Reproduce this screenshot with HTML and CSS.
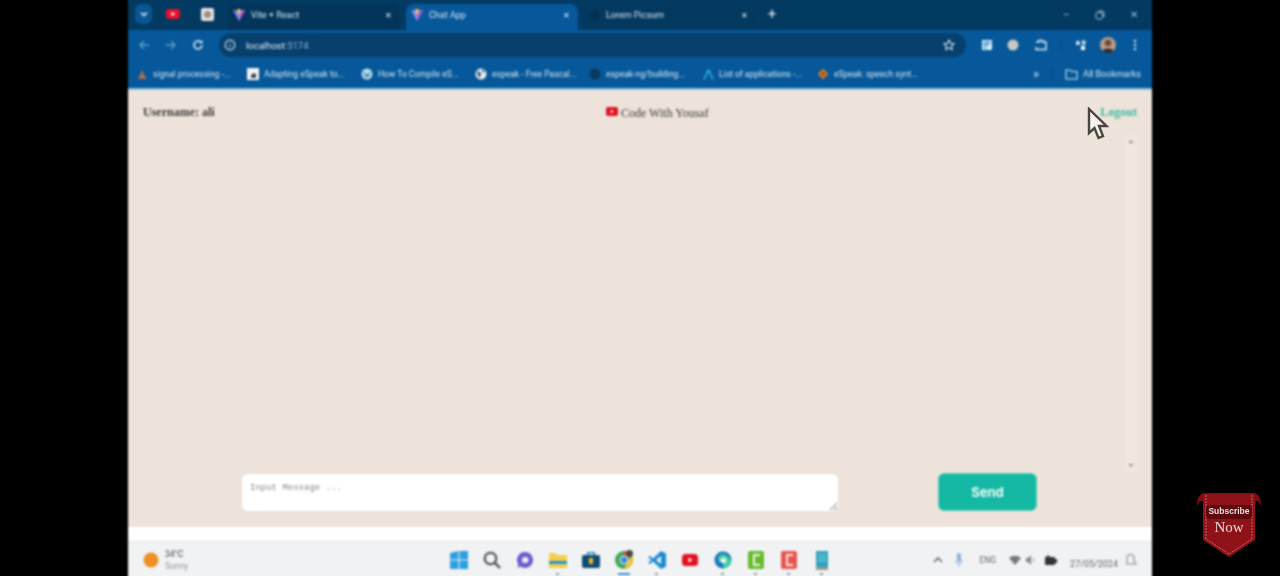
FILE: index.html
```html
<!DOCTYPE html>
<html lang="en">
<head>
    <meta charset="UTF-8">
    <title>Chat App</title>
    <link rel="stylesheet" href="styles.css">
</head>
<body>
    <div class="screen">

        <!-- tabs -->
        <div class="tabbar">
            <div class="tab-menu">
                <svg width="10" height="10" viewBox="0 0 10 10"><path d="M2 3.5l3 3 3-3" fill="none" stroke="#dcecf8" stroke-width="1.6"/></svg>
            </div>
            <div class="pinned">
                <svg width="14" height="10" viewBox="0 0 14 10"><rect width="14" height="10" rx="3" fill="#e8102a"/><path d="M5.5 3l4 2-4 2z" fill="#fff"/></svg>
            </div>
            <div class="pinned">
                <svg width="13" height="13" viewBox="0 0 13 13"><rect width="13" height="13" rx="2" fill="#e6e3de"/><circle cx="6.5" cy="6.5" r="3.6" fill="#9b8f80"/></svg>
            </div>
            <div class="tab">
                <svg class="vite" width="12" height="12" viewBox="0 0 12 12"><path d="M0 1l6 1 6-1-6 11z" fill="#7f8cf0"/><path d="M6 2l6-1-6 11z" fill="#b05fd8"/><path d="M4 0l4 .6-2 6z" fill="#ffd34d"/></svg>
                <span class="tab-title">Vite + React</span>
                <span class="tab-close">✕</span>
            </div>
            <div class="tab active">
                <svg class="vite" width="12" height="12" viewBox="0 0 12 12"><path d="M0 1l6 1 6-1-6 11z" fill="#7f8cf0"/><path d="M6 2l6-1-6 11z" fill="#b05fd8"/><path d="M4 0l4 .6-2 6z" fill="#ffd34d"/></svg>
                <span class="tab-title">Chat App</span>
                <span class="tab-close">✕</span>
            </div>
            <div class="tab last">
                <svg width="11" height="11" viewBox="0 0 11 11"><circle cx="5.5" cy="5.5" r="5" fill="#07304f"/></svg>
                <span class="tab-title">Lorem Picsum</span>
                <span class="tab-close">✕</span>
            </div>
            <div class="new-tab">+</div>
            <div class="win-btns">
                <span>–</span>
                <svg width="10" height="10" viewBox="0 0 10 10"><rect x="1" y="2.5" width="6.5" height="6.5" rx="1.5" fill="none" stroke="#a9c3d6"/><path d="M3 1h4.5a1.5 1.5 0 0 1 1.5 1.5v4.5" fill="none" stroke="#a9c3d6"/></svg>
                <span>✕</span>
            </div>
        </div>

        <!-- url bar -->
        <div class="toolbar">
            <svg class="nav" width="12" height="12" viewBox="0 0 12 12"><path d="M11 6H2M6 2L2 6l4 4" fill="none" stroke="#5f9fce" stroke-width="1.3"/></svg>
            <svg class="nav" width="12" height="12" viewBox="0 0 12 12"><path d="M1 6h9M6 2l4 4-4 4" fill="none" stroke="#5f9fce" stroke-width="1.3"/></svg>
            <svg class="nav" width="12" height="12" viewBox="0 0 12 12"><path d="M10 6a4 4 0 1 1-1.2-2.900" fill="none" stroke="#e4f0fa" stroke-width="1.5"/><path d="M10.5 1v3.300H7.200z" fill="#e4f0fa"/></svg>
            <div class="omnibox">
                <svg width="12" height="12" viewBox="0 0 12 12"><circle cx="6" cy="6" r="4.8" fill="none" stroke="#cfe3f2" stroke-width="1.2"/><path d="M6 5.5v3M6 3.400v1" stroke="#cfe3f2"/></svg>
                <span class="url">localhost<span class="port">:5174</span></span>
                <svg class="star" width="12" height="12" viewBox="0 0 12 12"><path d="M6 1l1.5 3.300 3.600.4-2.700 2.400.8 3.500L6 8.800l-3.200 1.800.8-3.500L.9 4.700l3.600-.4z" fill="none" stroke="#d8e8f4" stroke-width="1.1"/></svg>
            </div>
            <div class="ext-icons">
                <svg class="e1" width="12" height="12" viewBox="0 0 12 12"><rect x="1" y="1" width="10" height="10" fill="#d6ecf8"/><path d="M2.5 3.500h7M2.5 6h5" stroke="#2b82c0" stroke-width="1.3"/><rect x="2.5" y="8" width="3" height="2" fill="#37c0e0"/></svg>
                <svg class="e2" width="12" height="12" viewBox="0 0 12 12"><circle cx="6" cy="6" r="5.5" fill="#c9c9c4"/></svg>
                <svg class="e3" width="14" height="14" viewBox="0 0 14 14"><path d="M2 4h3V2.500h3.500V4H12v7.500H2V9" fill="none" stroke="#dcecf8" stroke-width="1.4"/></svg>
                <i class="sep e4"></i>
                <svg class="e5" width="12" height="12" viewBox="0 0 12 12"><path d="M1 2h4v4H1zM7 1l4 1-1 4H7z" fill="#c3d7e6"/><rect x="6" y="7" width="4" height="4" fill="#fff"/></svg>
                <svg class="e6" width="16" height="16" viewBox="0 0 16 16"><circle cx="8" cy="8" r="8" fill="#b89a86"/><circle cx="8" cy="6" r="3.2" fill="#6a4a3a"/><path d="M2.5 14c1-3.500 10-3.500 11 0a8 8 0 0 1-11 0z" fill="#2b2a33"/></svg>
                <svg class="e7" width="4" height="12" viewBox="0 0 4 12"><circle cx="2" cy="2" r="1.2" fill="#d8e8f4"/><circle cx="2" cy="6" r="1.2" fill="#d8e8f4"/><circle cx="2" cy="10" r="1.2" fill="#d8e8f4"/></svg>
            </div>
        </div>

        <!-- bookmarks -->
        <div class="bookmarks">
            <div class="bm first">
                <svg width="11" height="11" viewBox="0 0 11 11"><path d="M1 10L5 1l2 5 3 4z" fill="#a3714f"/></svg>
                <span>signal processing -...</span>
            </div>
            <div class="bm">
                <svg width="12" height="12" viewBox="0 0 12 12"><rect width="12" height="12" fill="#f3f3f3"/><path d="M4 8a3 3 0 0 1 5-2v4H4z" fill="#33475b"/></svg>
                <span>Adapting eSpeak to...</span>
            </div>
            <div class="bm">
                <svg width="12" height="12" viewBox="0 0 12 12"><circle cx="6" cy="6" r="5.5" fill="#b8dbe9"/><path d="M3 4l2 5 1-3 1 3 2-5" fill="none" stroke="#2a7aa5"/></svg>
                <span>How To Compile eS...</span>
            </div>
            <div class="bm">
                <svg width="12" height="12" viewBox="0 0 12 12"><circle cx="6" cy="6" r="5.5" fill="#e9eef2"/><path d="M2 3l3 1 1 3-2 3-1-3zM7 1l3 2-2 2z" fill="#27506f"/></svg>
                <span>espeak - Free Pascal...</span>
            </div>
            <div class="bm">
                <svg width="12" height="12" viewBox="0 0 12 12"><circle cx="6" cy="6" r="5.5" fill="#0a3a60"/></svg>
                <span>espeak-ng/building...</span>
            </div>
            <div class="bm">
                <svg width="11" height="11" viewBox="0 0 11 11"><path d="M1 10.500L5.500 1 10 10.500" fill="none" stroke="#30b4ea" stroke-width="1.6"/></svg>
                <span>List of applications -...</span>
            </div>
            <div class="bm">
                <svg width="12" height="12" viewBox="0 0 12 12"><path d="M6 .5L11.500 6 6 11.500.5 6z" fill="#c9772f"/><circle cx="6" cy="6" r="2" fill="#8d5a2e"/></svg>
                <span>eSpeak: speech synt...</span>
            </div>
            <div class="bm-end">
                <span class="more">»</span>
                <i class="sep"></i>
                <svg width="13" height="11" viewBox="0 0 13 11"><path d="M1 1h4l1.500 1.500H12V10H1z" fill="none" stroke="#c9dfef" stroke-width="1.1"/></svg>
                <span>All Bookmarks</span>
            </div>
        </div>

        <!-- page -->
        <div class="chat">
            <div class="chat-head">
                <div class="user">Username: ali</div>
                <div class="channel">
                    <svg width="12" height="9" viewBox="0 0 12 9"><rect width="12" height="9" rx="2" fill="#e3101f"/><path d="M4.800 2.600l3 1.900-3 1.900z" fill="#fff"/></svg>
                    <span>Code With Yousaf</span>
                </div>
                <a class="logout">Logout</a>
            </div>
            <div class="messages">
                <div class="scroll">
                    <span class="up"></span>
                    <span class="down"></span>
                </div>
            </div>
            <div class="chat-form">
                <textarea class="msg" placeholder="Input Message ..."></textarea>
                <button class="send">Send</button>
            </div>
        </div>
        <div class="strip"></div>

        <!-- windows taskbar -->
        <div class="taskbar">
            <div class="weather">
                <svg width="16" height="16" viewBox="0 0 16 16"><circle cx="8" cy="8" r="7.5" fill="#ee9024"/></svg>
                <div class="weather-txt"><span>34°C</span><span class="sunny">Sunny</span></div>
            </div>
            <div class="apps">
                <div class="app">
                    <svg width="18" height="18" viewBox="0 0 18 18"><path d="M0 2l8.500-2v8.500H0zM9.500 0H18v8.500H9.500zM0 9.500h8.500V18H0zM9.500 9.500H18V18H9.500z" fill="#2b9fe0"/></svg>
                </div>
                <div class="app">
                    <svg width="18" height="18" viewBox="0 0 18 18"><circle cx="7.5" cy="7.5" r="5.8" fill="none" stroke="#444" stroke-width="2"/><path d="M12 12l5 5" stroke="#444" stroke-width="2.2"/></svg>
                </div>
                <div class="app">
                    <svg width="18" height="18" viewBox="0 0 18 18"><path d="M9 1a8 8 0 1 1-4.500 14.600L1.500 17l.9-3.500A8 8 0 0 1 9 1z" fill="#6d5bd0"/><rect x="6" y="6" width="6.5" height="6" rx="3" fill="#eee"/></svg>
                </div>
                <div class="app dot">
                    <svg width="18" height="16" viewBox="0 0 18 16"><path d="M0 1h6l2 2h10v13H0z" fill="#f4cf4a"/><rect y="9" width="18" height="3" fill="#2b8fd0"/></svg>
                </div>
                <div class="app">
                    <svg width="18" height="16" viewBox="0 0 18 16"><rect y="3" width="18" height="13" rx="2" fill="#0f4a75"/><path d="M5 0h8v3h-1.500V1.500h-5V3H5z" fill="#1a86c9"/><rect x="7" y="6" width="4" height="6" fill="#e8b52c"/></svg>
                </div>
                <div class="app open">
                    <svg width="20" height="20" viewBox="0 0 20 20"><circle cx="10" cy="10" r="9" fill="#3aa655"/><path d="M10 1a9 9 0 0 1 8 5h-8z" fill="#e5483c"/><path d="M18 6a9 9 0 0 1-8 13l4-8z" fill="#f2c230"/><circle cx="10" cy="10" r="4" fill="#3f82e0" stroke="#fff"/><circle cx="15.5" cy="3.5" r="3.5" fill="#4b4643"/></svg>
                </div>
                <div class="app dot">
                    <svg width="18" height="18" viewBox="0 0 18 18"><path d="M13 0l5 2.500v13L13 18 5 10.500 2 13 0 11.500 3.500 9 0 6.500 2 5l3 2.500z" fill="#1c8ad6"/><path d="M13 5L8 9l5 4z" fill="#f1f2f3"/></svg>
                </div>
                <div class="app">
                    <svg width="16" height="12" viewBox="0 0 16 12"><rect width="16" height="12" rx="3.5" fill="#e3101f"/><path d="M6.500 3.500l4 2.500-4 2.500z" fill="#fff"/></svg>
                </div>
                <div class="app dot">
                    <svg width="18" height="18" viewBox="0 0 18 18"><circle cx="9" cy="9" r="8.5" fill="#1773bd"/><path d="M5 11a5 5 0 0 1 8-6c3 1 4 4 4 6a8 8 0 0 1-6 6c-3-1-3-4-1-6z" fill="#3fd0a5"/><circle cx="9.5" cy="9.5" r="2.8" fill="#f1f2f3"/></svg>
                </div>
                <div class="app dot">
                    <svg width="16" height="18" viewBox="0 0 16 18"><rect width="16" height="18" rx="2" fill="#66bb2e"/><path d="M12 4H6v10h6" fill="none" stroke="#eef7e4" stroke-width="2"/></svg>
                </div>
                <div class="app dot">
                    <svg width="16" height="18" viewBox="0 0 16 18"><rect width="16" height="18" rx="2" fill="#e8534d"/><path d="M12 4H6v10h6" fill="none" stroke="#fbe8e6" stroke-width="2"/></svg>
                </div>
                <div class="app dot">
                    <svg width="12" height="19" viewBox="0 0 12 19"><rect width="12" height="16" fill="#2ea3bd"/><rect y="16" width="12" height="3" fill="#9c9a8f"/><path d="M2 4h8M2 7h8M2 10h8" stroke="#8fd4e2"/></svg>
                </div>
            </div>
            <div class="tray">
                <svg width="10" height="6" viewBox="0 0 10 6"><path d="M1 5l4-4 4 4" fill="none" stroke="#555" stroke-width="1.3"/></svg>
                <svg class="t-mic" width="8" height="14" viewBox="0 0 8 14"><rect x="2" y="0" width="4" height="9" rx="2" fill="#8fb2d8"/><path d="M.5 7a3.500 3.500 0 0 0 7 0M4 11v3" fill="none" stroke="#8fb2d8"/></svg>
                <span class="t-lang">ENG</span>
                <svg class="t-wifi" width="12" height="10" viewBox="0 0 12 10"><path d="M0 3a9 9 0 0 1 12 0L6 10z" fill="#777"/></svg>
                <svg class="t-vol" width="9" height="10" viewBox="0 0 9 10"><path d="M0 3h2l3-3v10L2 7H0z" fill="#888"/><path d="M7 3a3 3 0 0 1 0 4" fill="none" stroke="#999"/></svg>
                <svg class="t-bat" width="12" height="10" viewBox="0 0 12 10"><rect y="2" width="10" height="8" rx="1" fill="#333"/><path d="M3 0l2 2H1z" fill="#333"/><rect x="10" y="4" width="2" height="4" fill="#333"/></svg>
                <span class="t-date">27/05/2024</span>
                <svg class="t-bell" width="11" height="13" viewBox="0 0 11 13"><path d="M1 10V4a3.500 3.500 0 0 1 7 0v3l2 3z" fill="none" stroke="#888" stroke-width="1.1"/></svg>
            </div>
        </div>
    </div>

    <!-- overlays from the video -->
    <svg class="pointer" width="22" height="34" viewBox="0 0 22 34"><path d="M2 2v24l5.500-5 4 10 4.500-2-4-10h7.500z" fill="#f6f2ee" stroke="#4b443f" stroke-width="2.4"/></svg>

    <svg class="badge" width="64" height="66" viewBox="0 0 64 66">
        <path d="M0 14C0 6 3 1 8 1h48c5 0 8 5 8 13l-3-5H3z" fill="#7c0d12"/>
        <path d="M6 2h52v46L32 65 6 48z" fill="#8f1218"/>
        <path d="M9 3v44l23 15 23-15V3" fill="none" stroke="#c8666a" stroke-dasharray="2 1"/>
        <rect x="9" y="13" width="46" height="14" rx="4" fill="#5d0a0e"/>
        <text class="sub" x="32" y="22" text-anchor="middle">Subscribe</text>
        <text class="now" x="32" y="40" text-anchor="middle">Now</text>
    </svg>
</body>
</html>
```

FILE: styles.css
```css
html, body {
    margin: 0;
    height: 576px;
    background: #000;
    overflow: hidden;
}

body {
    position: relative;
    font-family: "Roboto", "Liberation Sans", sans-serif;
}

/* 4px extra top and bottom so the blur does not fade at the window edge */
.screen {
    width: 1024px;
    height: 584px;
    margin: -4px auto 0;
    display: flex;
    flex-direction: column;
    filter: blur(0.8px);
}

svg {
    flex: none;
    display: block;
}

.sep {
    width: 1px;
    height: 14px;
    background: #0b4a7c;
}

/* tabs */
.tabbar {
    height: 34px;
    flex: none;
    display: flex;
    align-items: flex-end;
    background: #033a62;
    padding-left: 7px;
    color: #d5e5f1;
    font-size: 9px;
}

.tab-menu {
    width: 17px;
    height: 20px;
    margin-bottom: 6px;
    border-radius: 6px;
    background: #0a5593;
    display: flex;
    align-items: center;
    justify-content: center;
}

.pinned {
    width: 34px;
    height: 20px;
    margin-bottom: 6px;
    display: flex;
    align-items: center;
    justify-content: center;
}

.tab-menu + .pinned {
    margin-left: 4px;
}

.pinned + .pinned {
    width: 32px;
    padding-left: 2px;
    box-sizing: border-box;
}

.tab {
    width: 172px;
    height: 26px;
    display: flex;
    align-items: center;
    padding: 0 6px 4px 5px;
    box-sizing: border-box;
    border-radius: 8px 8px 0 0;
    background: #03355a;
    margin-left: 6px;
}

.tab svg {
    margin-right: 6px;
}

.tab.active {
    background: #06589a;
}

.tab.last {
    background: #03395f;
}

.tab-title {
    flex: 1;
    white-space: nowrap;
}

.tab-close {
    font-size: 8px;
    color: #e8f1f8;
    margin-right: 2px;
}

.new-tab {
    width: 32px;
    text-align: center;
    font-size: 15px;
    line-height: 15px;
    margin-bottom: 8px;
    color: #e8f1f8;
}

.win-btns {
    margin-left: auto;
    width: 89px;
    margin-bottom: 10px;
    padding-right: 14px;
    box-sizing: border-box;
    display: flex;
    justify-content: space-between;
    align-items: center;
    font-size: 10px;
    color: #a9c3d6;
}

/* url bar */
.toolbar {
    height: 30px;
    flex: none;
    display: flex;
    align-items: center;
    background: #06589a;
    padding-left: 10px;
}

.nav {
    margin-right: 15px;
}

.omnibox {
    width: 747px;
    height: 24px;
    border-radius: 12px;
    background: #073f6d;
    display: flex;
    align-items: center;
    padding: 0 11px 0 5px;
    box-sizing: border-box;
}

.url {
    margin-left: 10px;
    font-size: 9.5px;
    color: #e2eef7;
}

.port {
    color: #8eb4d0;
}

.star {
    margin-left: auto;
}

.ext-icons {
    flex: 1;
    display: flex;
    align-items: center;
}

.e1 { margin-left: 15px; }
.e2 { margin-left: 14px; }
.e3 { margin-left: 15px; }
.e4 { margin-left: 13px; }
.e5 { margin-left: 13px; }
.e6 { margin-left: 13px; }
.e7 { margin-left: 17px; }

/* bookmarks */
.bookmarks {
    height: 28px;
    flex: none;
    display: flex;
    align-items: center;
    background: #06589a;
    border-bottom: 2px solid #8fc0dc;
    padding-left: 9px;
    font-size: 8.5px;
    color: #d4e5f1;
}

.bm {
    width: 114px;
    display: flex;
    align-items: center;
    gap: 5px;
    white-space: nowrap;
}

.bm.first {
    width: 110px;
}

.bm-end {
    margin-left: auto;
    padding-right: 11px;
    display: flex;
    align-items: center;
    gap: 5px;
    font-size: 9px;
}

.more {
    font-size: 13px;
    line-height: 12px;
    margin-right: 8px;
}

.bm-end .sep {
    margin-right: 7px;
}

/* chat page */
.chat {
    height: 437px;
    flex: none;
    display: flex;
    flex-direction: column;
    background: #ede3da;
    font-family: "Liberation Serif", serif;
    font-size: 12px;
    color: #3a3a38;
}

.chat-head {
    height: 45px;
    flex: none;
    display: flex;
    align-items: flex-start;
    padding: 15px 15px 0;
    box-sizing: border-box;
}

.user {
    width: 463px;
    font-weight: bold;
}

.channel {
    display: flex;
    gap: 3px;
    margin-top: 1px;
}

.channel svg {
    margin-top: 1px;
}

.logout {
    margin-left: auto;
    font-weight: bold;
    color: #3eb9a1;
}

.messages {
    height: 337px;
    flex: none;
    display: flex;
    justify-content: flex-end;
    padding-right: 15px;
}

.scroll {
    width: 12px;
    background: #efe7e0;
    display: flex;
    flex-direction: column;
    justify-content: space-between;
    align-items: center;
    padding: 5px 0;
    box-sizing: border-box;
}

.up {
    border: 3px solid transparent;
    border-top: 0;
    border-bottom: 3px solid #9a9a98;
}

.down {
    border: 3px solid transparent;
    border-bottom: 0;
    border-top: 3px solid #9a9a98;
}

.chat-form {
    display: flex;
    align-items: flex-start;
    padding: 1px 0 0 114px;
}

.msg {
    width: 596px;
    height: 37px;
    margin: 1px 0 0;
    border: 0;
    border-radius: 6px;
    background: #fff;
    padding: 9px 8px 5px;
    box-sizing: border-box;
    outline: none;
    font-family: "Liberation Mono", monospace;
    font-size: 9px;
    line-height: 11px;
}

.msg::placeholder {
    color: #8a8a8a;
}

.send {
    width: 99px;
    height: 38px;
    margin-left: 100px;
    border: 1px solid #5fd0bd;
    border-radius: 6px;
    background: #14b8a3;
    color: #f2fbf9;
    font-family: "Inter", "Liberation Sans", sans-serif;
    font-size: 13px;
    font-weight: 700;
}

.strip {
    height: 14px;
    flex: none;
    background: #fff;
    border-bottom: 1px solid #e4e4e4;
}

/* taskbar */
.taskbar {
    flex: 1;
    display: grid;
    grid-template-columns: 1fr auto 1fr;
    align-items: center;
    background: #f1f2f3;
    padding: 2px 0 4px;
    box-sizing: border-box;
}

.weather {
    display: flex;
    align-items: center;
    gap: 6px;
    padding-left: 15px;
}

.weather-txt {
    display: flex;
    flex-direction: column;
    font-size: 8.5px;
    line-height: 12px;
    color: #444;
}

.sunny {
    color: #999;
}

.apps {
    display: flex;
}

.app {
    width: 33px;
    height: 30px;
    position: relative;
    display: flex;
    align-items: center;
    justify-content: center;
}

.app.dot::after {
    content: "";
    position: absolute;
    left: 15px;
    bottom: 0;
    width: 3px;
    height: 2px;
    background: #999;
}

.app.open::after {
    content: "";
    position: absolute;
    left: 11px;
    bottom: 0;
    width: 12px;
    height: 2px;
    background: #3a88c9;
}

.tray {
    display: flex;
    align-items: center;
    justify-content: flex-end;
    padding-right: 15px;
    font-size: 8.5px;
    color: #666;
}

.t-mic { margin-left: 12px; }
.t-lang { margin-left: 16px; }
.t-wifi { margin-left: 13px; }
.t-vol { margin-left: 5px; }
.t-bat { margin-left: 10px; }
.t-bell { margin-left: 8px; }

.t-date {
    margin: 8px 0 0 13px;
    font-size: 9px;
    white-space: nowrap;
}

/* overlays */
.pointer {
    position: absolute;
    left: 1087px;
    top: 107px;
    filter: blur(0.5px);
}

.badge {
    position: absolute;
    left: 1197px;
    top: 492px;
    filter: blur(0.5px);
}

.sub {
    font-family: "Liberation Sans", sans-serif;
    font-size: 8.5px;
    font-weight: bold;
    fill: #e8dcdc;
}

.now {
    font-family: "Liberation Serif", serif;
    font-size: 15px;
    fill: #e8dcdc;
}
```
